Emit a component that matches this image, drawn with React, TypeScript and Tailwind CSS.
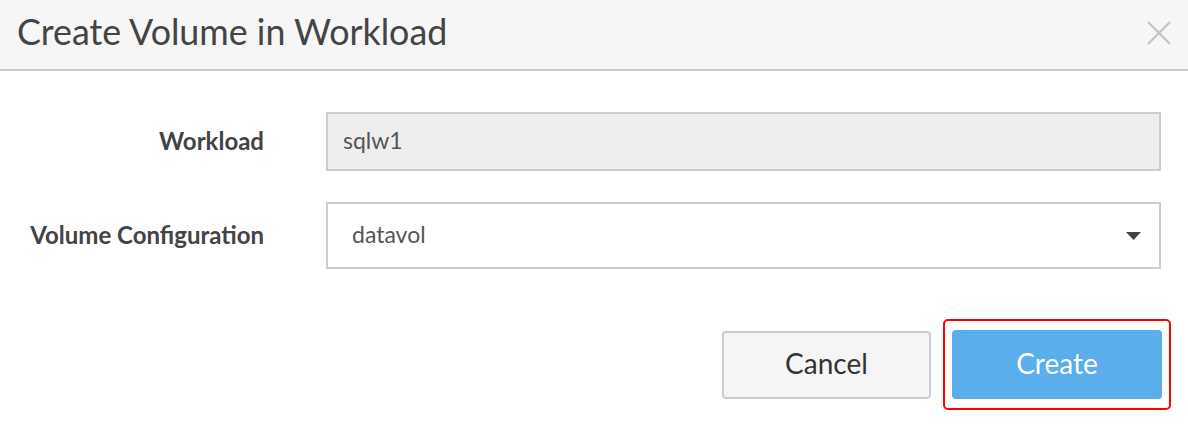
import React from "react";

export default function App() {
  return (
    <div className="w-[1188px] h-[426px] bg-white font-['Lato',sans-serif] overflow-hidden">
      {/* header */}
      <div className="h-[71px] bg-[#f6f6f6] border-b-2 border-[#c8c8c8] flex items-center justify-between pl-[17px] pr-[16px]">
        <h1 className="text-[35.8px] text-[#444] leading-none -mt-[6px]">Create Volume in Workload</h1>
        <button className="w-[26px] h-[26px] flex items-center justify-center -mt-[3px]">
          <svg width="24" height="24" viewBox="0 0 24 24">
            <path d="M1 1 L23 23 M23 1 L1 23" stroke="#c2c2c2" strokeWidth="2" fill="none" />
          </svg>
        </button>
      </div>

      {/* form */}
      <div className="grid grid-cols-[264px_1fr] gap-x-[62px] gap-y-[31px] pt-[41px] pr-[27px] items-center">
        <label className="text-right font-bold text-[24px] text-[#444] -mt-[2px]">Workload</label>
        <div className="h-[59px] bg-[#eeeeee] border-2 border-[#cccccc] flex items-center px-[15px] text-[23px] text-[#555]">
          <span className="-mt-[2px]">sqlw1</span>
        </div>
        <label className="text-right font-bold text-[24px] text-[#444] -mt-[2px]">Volume Configuration</label>
        <div className="h-[67px] bg-white border-2 border-[#cccccc] flex items-center justify-between pl-[24px] pr-[18px] text-[23px] text-[#555]">
          <span className="-mt-[2px]">datavol</span>
          <svg width="15" height="8" viewBox="0 0 15 8">
            <path d="M0 0 H15 L7.5 8 Z" fill="#444" />
          </svg>
        </div>
      </div>

      {/* actions */}
      <div className="flex justify-end items-center mt-[50px] pr-[17px]">
        <button className="w-[209px] h-[68px] bg-[#f5f5f5] border-2 border-[#cccccc] rounded-[4px] text-[28px] text-[#333] mr-[12px] pb-[3px]">
          Cancel
        </button>
        <div className="border-2 border-[#ff0000] rounded-[5px] px-[7px] py-[9px]">
          <button className="w-[210px] h-[69px] bg-[#5aaeec] rounded-[4px] text-[28px] text-white pb-[3px]">
            Create
          </button>
        </div>
      </div>
    </div>
  );
}
